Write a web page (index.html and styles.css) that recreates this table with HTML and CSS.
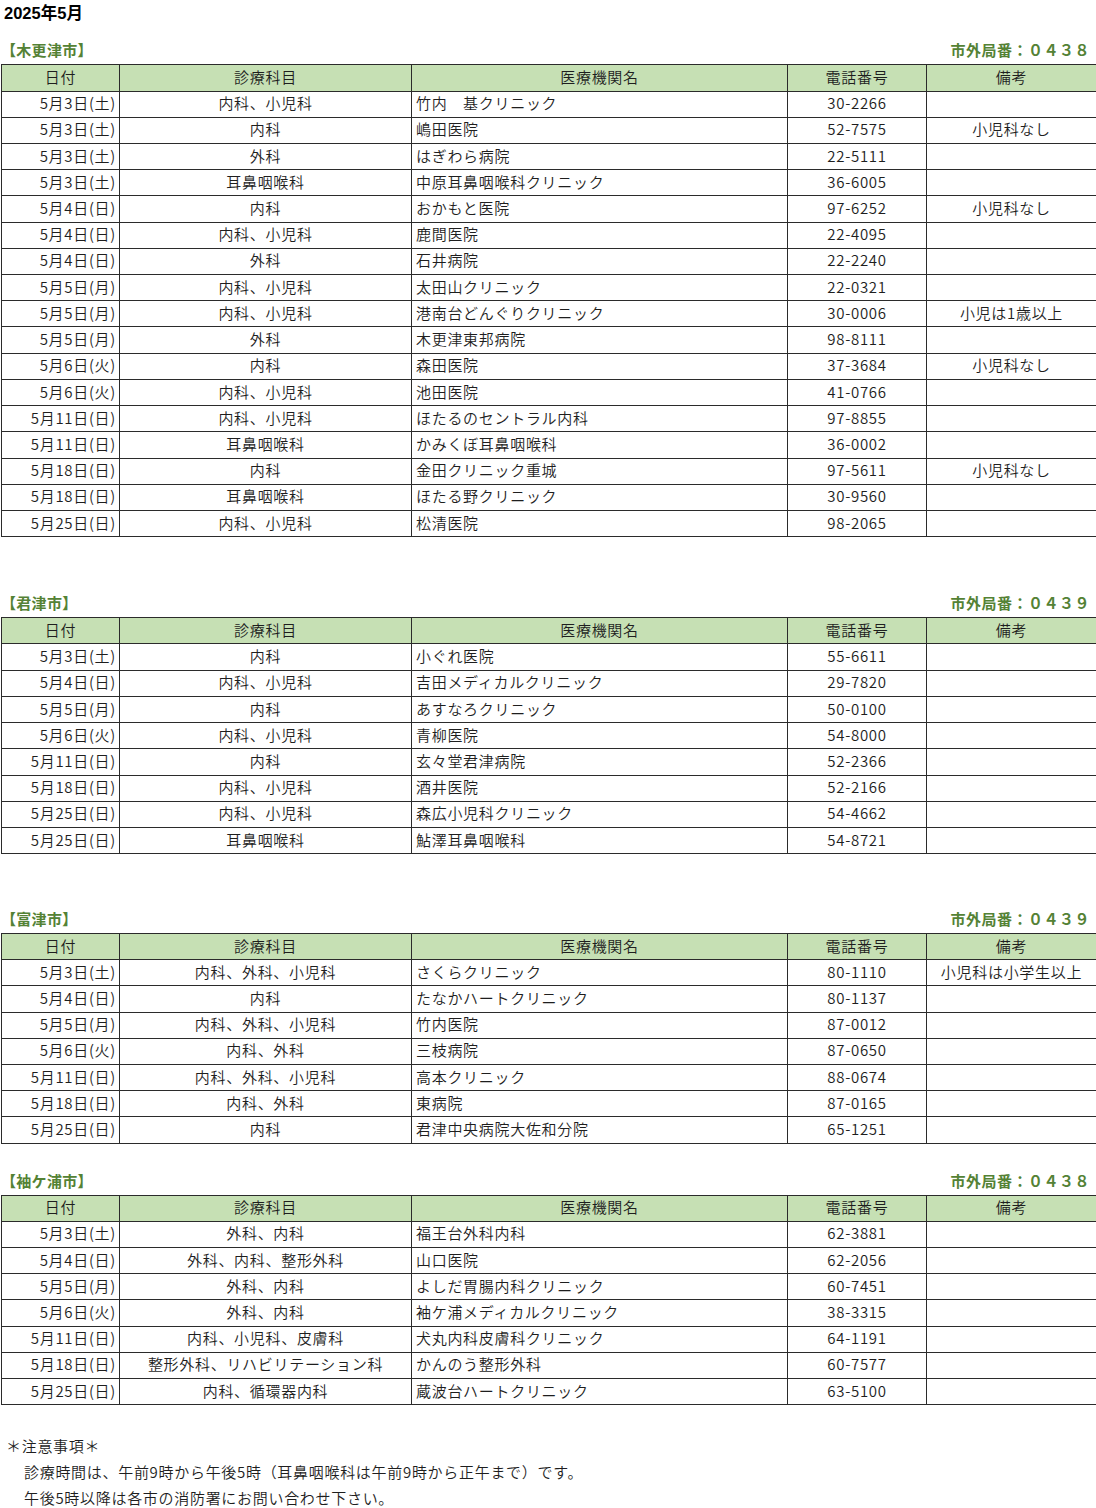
FILE: index.html
```html
<!DOCTYPE html>
<html lang="ja">
<head>
<meta charset="utf-8">
<title>2025年5月 休日当番医</title>
<link rel="stylesheet" href="styles.css">
</head>
<body>
<main class="page">
  <h1 class="title">2025年5月</h1>

  <section class="area area-1">
    <div class="area-head"><span class="area-name">【木更津市】</span><span class="area-code">市外局番：０４３８</span></div>
    <table class="sched">
      <colgroup><col class="c-date"><col class="c-dept"><col class="c-name"><col class="c-tel"><col class="c-note"></colgroup>
      <thead><tr><th>日付</th><th>診療科目</th><th>医療機関名</th><th>電話番号</th><th>備考</th></tr></thead>
      <tbody>
        <tr><td class="d">5月3日(土)</td><td>内科、小児科</td><td class="n">竹内　基クリニック</td><td>30-2266</td><td></td></tr>
        <tr><td class="d">5月3日(土)</td><td>内科</td><td class="n">嶋田医院</td><td>52-7575</td><td>小児科なし</td></tr>
        <tr><td class="d">5月3日(土)</td><td>外科</td><td class="n">はぎわら病院</td><td>22-5111</td><td></td></tr>
        <tr><td class="d">5月3日(土)</td><td>耳鼻咽喉科</td><td class="n">中原耳鼻咽喉科クリニック</td><td>36-6005</td><td></td></tr>
        <tr><td class="d">5月4日(日)</td><td>内科</td><td class="n">おかもと医院</td><td>97-6252</td><td>小児科なし</td></tr>
        <tr><td class="d">5月4日(日)</td><td>内科、小児科</td><td class="n">鹿間医院</td><td>22-4095</td><td></td></tr>
        <tr><td class="d">5月4日(日)</td><td>外科</td><td class="n">石井病院</td><td>22-2240</td><td></td></tr>
        <tr><td class="d">5月5日(月)</td><td>内科、小児科</td><td class="n">太田山クリニック</td><td>22-0321</td><td></td></tr>
        <tr><td class="d">5月5日(月)</td><td>内科、小児科</td><td class="n">港南台どんぐりクリニック</td><td>30-0006</td><td>小児は1歳以上</td></tr>
        <tr><td class="d">5月5日(月)</td><td>外科</td><td class="n">木更津東邦病院</td><td>98-8111</td><td></td></tr>
        <tr><td class="d">5月6日(火)</td><td>内科</td><td class="n">森田医院</td><td>37-3684</td><td>小児科なし</td></tr>
        <tr><td class="d">5月6日(火)</td><td>内科、小児科</td><td class="n">池田医院</td><td>41-0766</td><td></td></tr>
        <tr><td class="d">5月11日(日)</td><td>内科、小児科</td><td class="n">ほたるのセントラル内科</td><td>97-8855</td><td></td></tr>
        <tr><td class="d">5月11日(日)</td><td>耳鼻咽喉科</td><td class="n">かみくぼ耳鼻咽喉科</td><td>36-0002</td><td></td></tr>
        <tr><td class="d">5月18日(日)</td><td>内科</td><td class="n">金田クリニック重城</td><td>97-5611</td><td>小児科なし</td></tr>
        <tr><td class="d">5月18日(日)</td><td>耳鼻咽喉科</td><td class="n">ほたる野クリニック</td><td>30-9560</td><td></td></tr>
        <tr><td class="d">5月25日(日)</td><td>内科、小児科</td><td class="n">松清医院</td><td>98-2065</td><td></td></tr>
      </tbody>
    </table>
  </section>

  <section class="area area-2">
    <div class="area-head"><span class="area-name">【君津市】</span><span class="area-code">市外局番：０４３９</span></div>
    <table class="sched">
      <colgroup><col class="c-date"><col class="c-dept"><col class="c-name"><col class="c-tel"><col class="c-note"></colgroup>
      <thead><tr><th>日付</th><th>診療科目</th><th>医療機関名</th><th>電話番号</th><th>備考</th></tr></thead>
      <tbody>
        <tr><td class="d">5月3日(土)</td><td>内科</td><td class="n">小ぐれ医院</td><td>55-6611</td><td></td></tr>
        <tr><td class="d">5月4日(日)</td><td>内科、小児科</td><td class="n">吉田メディカルクリニック</td><td>29-7820</td><td></td></tr>
        <tr><td class="d">5月5日(月)</td><td>内科</td><td class="n">あすなろクリニック</td><td>50-0100</td><td></td></tr>
        <tr><td class="d">5月6日(火)</td><td>内科、小児科</td><td class="n">青柳医院</td><td>54-8000</td><td></td></tr>
        <tr><td class="d">5月11日(日)</td><td>内科</td><td class="n">玄々堂君津病院</td><td>52-2366</td><td></td></tr>
        <tr><td class="d">5月18日(日)</td><td>内科、小児科</td><td class="n">酒井医院</td><td>52-2166</td><td></td></tr>
        <tr><td class="d">5月25日(日)</td><td>内科、小児科</td><td class="n">森広小児科クリニック</td><td>54-4662</td><td></td></tr>
        <tr><td class="d">5月25日(日)</td><td>耳鼻咽喉科</td><td class="n">鮎澤耳鼻咽喉科</td><td>54-8721</td><td></td></tr>
      </tbody>
    </table>
  </section>

  <section class="area area-3">
    <div class="area-head"><span class="area-name">【富津市】</span><span class="area-code">市外局番：０４３９</span></div>
    <table class="sched">
      <colgroup><col class="c-date"><col class="c-dept"><col class="c-name"><col class="c-tel"><col class="c-note"></colgroup>
      <thead><tr><th>日付</th><th>診療科目</th><th>医療機関名</th><th>電話番号</th><th>備考</th></tr></thead>
      <tbody>
        <tr><td class="d">5月3日(土)</td><td>内科、外科、小児科</td><td class="n">さくらクリニック</td><td>80-1110</td><td>小児科は小学生以上</td></tr>
        <tr><td class="d">5月4日(日)</td><td>内科</td><td class="n">たなかハートクリニック</td><td>80-1137</td><td></td></tr>
        <tr><td class="d">5月5日(月)</td><td>内科、外科、小児科</td><td class="n">竹内医院</td><td>87-0012</td><td></td></tr>
        <tr><td class="d">5月6日(火)</td><td>内科、外科</td><td class="n">三枝病院</td><td>87-0650</td><td></td></tr>
        <tr><td class="d">5月11日(日)</td><td>内科、外科、小児科</td><td class="n">高本クリニック</td><td>88-0674</td><td></td></tr>
        <tr><td class="d">5月18日(日)</td><td>内科、外科</td><td class="n">東病院</td><td>87-0165</td><td></td></tr>
        <tr><td class="d">5月25日(日)</td><td>内科</td><td class="n">君津中央病院大佐和分院</td><td>65-1251</td><td></td></tr>
      </tbody>
    </table>
  </section>

  <section class="area area-4">
    <div class="area-head"><span class="area-name">【袖ケ浦市】</span><span class="area-code">市外局番：０４３８</span></div>
    <table class="sched">
      <colgroup><col class="c-date"><col class="c-dept"><col class="c-name"><col class="c-tel"><col class="c-note"></colgroup>
      <thead><tr><th>日付</th><th>診療科目</th><th>医療機関名</th><th>電話番号</th><th>備考</th></tr></thead>
      <tbody>
        <tr><td class="d">5月3日(土)</td><td>外科、内科</td><td class="n">福王台外科内科</td><td>62-3881</td><td></td></tr>
        <tr><td class="d">5月4日(日)</td><td>外科、内科、整形外科</td><td class="n">山口医院</td><td>62-2056</td><td></td></tr>
        <tr><td class="d">5月5日(月)</td><td>外科、内科</td><td class="n">よしだ胃腸内科クリニック</td><td>60-7451</td><td></td></tr>
        <tr><td class="d">5月6日(火)</td><td>外科、内科</td><td class="n">袖ケ浦メディカルクリニック</td><td>38-3315</td><td></td></tr>
        <tr><td class="d">5月11日(日)</td><td>内科、小児科、皮膚科</td><td class="n">犬丸内科皮膚科クリニック</td><td>64-1191</td><td></td></tr>
        <tr><td class="d">5月18日(日)</td><td>整形外科、リハビリテーション科</td><td class="n">かんのう整形外科</td><td>60-7577</td><td></td></tr>
        <tr><td class="d">5月25日(日)</td><td>内科、循環器内科</td><td class="n">蔵波台ハートクリニック</td><td>63-5100</td><td></td></tr>
      </tbody>
    </table>
  </section>

  <section class="notes">
    <p class="notes-head">＊注意事項＊</p>
    <p class="notes-line">診療時間は、午前9時から午後5時（耳鼻咽喉科は午前9時から正午まで）です。</p>
    <p class="notes-line">午後5時以降は各市の消防署にお問い合わせ下さい。</p>
  </section>
</main>
</body>
</html>
```

FILE: styles.css
```css
* { box-sizing: border-box; }

html, body {
  margin: 0;
  padding: 0;
  background: #ffffff;
}

body {
  font-family: "Noto Sans CJK JP", "Noto Sans", sans-serif;
  font-size: 15px;
  font-weight: 350;
  color: #1e1e1e;
}

.page {
  width: 1096px;
}

.title {
  margin: 0;
  height: 26px;
  line-height: 26px;
  padding-left: 4px;
  font-family: "Liberation Sans", "Noto Sans CJK JP", sans-serif;
  font-size: 16.5px;
  font-weight: bold;
  color: #000;
}

.area-1 { margin-top: 12.3px; }
.area-2 { margin-top: 54px; }
.area-3 { margin-top: 52.7px; }
.area-4 { margin-top: 24.9px; }

.area-head {
  display: flex;
  justify-content: space-between;
  align-items: flex-start;
  height: 26px;
  line-height: 23px;
  padding: 0 6px 0 1px;
  color: #548235;
  font-weight: bold;
  font-size: 15px;
}

.area-name { letter-spacing: 0.3px; }
.area-code { letter-spacing: 0.5px; }

.sched {
  border-collapse: collapse;
  width: 1095px;
  margin-left: 1px;
  table-layout: fixed;
}

.c-date { width: 118px; }
.c-dept { width: 292px; }
.c-name { width: 376px; }
.c-tel { width: 139px; }
.c-note { width: 170px; }

.sched th,
.sched td {
  border: 1px solid #2b2b2b;
  height: 26.22px;
  padding: 0 4px 2px;
  line-height: 22px;
  font-weight: 350;
  text-align: center;
  vertical-align: middle;
  white-space: nowrap;
  overflow: hidden;
  letter-spacing: 0.7px;
}

.sched th {
  background: #c6e0b4;
  color: #1e1e1e;
}

.sched td.d { text-align: right; padding-right: 3px; }
.sched td.n { text-align: left; }

.notes {
  margin-top: 27.9px;
  letter-spacing: 0.7px;
}

.notes p {
  margin: 0;
  height: 26px;
  line-height: 26px;
}

.notes-head { padding-left: 6px; }
.notes-line { padding-left: 24px; }
```
